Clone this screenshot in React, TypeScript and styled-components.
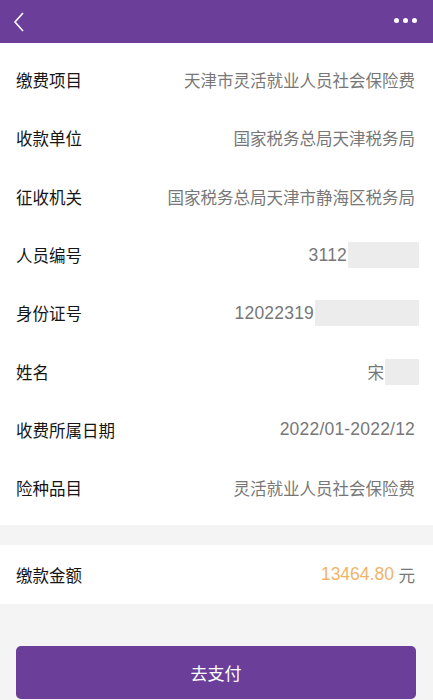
import styled, { createGlobalStyle } from "styled-components";

const GlobalStyle = createGlobalStyle`
  html, body {
    margin: 0;
    padding: 0;
    background: #f4f4f4;
    font-family: "Liberation Sans", "Noto Sans CJK SC", sans-serif;
  }
`;

const rows = [
  { label: "缴费项目", value: "天津市灵活就业人员社会保险费" },
  { label: "收款单位", value: "国家税务总局天津税务局" },
  { label: "征收机关", value: "国家税务总局天津市静海区税务局" },
  { label: "人员编号", value: "3112", num: true, mask: 71 },
  { label: "身份证号", value: "12022319", num: true, mask: 104 },
  { label: "姓名", value: "宋", mask: 34 },
  { label: "收费所属日期", value: "2022/01-2022/12", num: true },
  { label: "险种品目", value: "灵活就业人员社会保险费" },
];

export default function App() {
  return (
    <Page>
      <GlobalStyle />
      <Header>
        <BackButton>
          <svg width="12" height="20" viewBox="0 0 12 20">
            <path d="M10 1 L2 10 L10 19" fill="none" stroke="#fff" strokeWidth="1.6" />
          </svg>
        </BackButton>
        <Dots>
          <Dot />
          <Dot />
          <Dot />
        </Dots>
      </Header>

      <Section>
        {rows.map((r) => (
          <Row key={r.label}>
            <Label>{r.label}</Label>
            <Value>
              <Text $num={!!r.num}>{r.value}</Text>
              {r.mask && <Mask $w={r.mask} />}
            </Value>
          </Row>
        ))}
      </Section>

      <AmountSection>
        <Row>
          <Label>缴款金额</Label>
          <Value>
            <Amount>13464.80</Amount>
            <Text $num={false}> 元</Text>
          </Value>
        </Row>
      </AmountSection>

      <PayButton>去支付</PayButton>
    </Page>
  );
}

const Page = styled.div`
  width: 433px;
  min-height: 700px;
  background: #f4f4f4;
`;

const Header = styled.div`
  height: 43px;
  background: #6b3f99;
  display: flex;
  align-items: center;
  justify-content: space-between;
  padding: 0 16px 0 13px;
`;

const BackButton = styled.div`
  display: flex;
  align-items: center;
  height: 20px;
`;

const Dots = styled.div`
  display: flex;
  gap: 4px;
  margin-top: -3px;
`;

const Dot = styled.span`
  width: 5px;
  height: 5px;
  border-radius: 50%;
  background: #fff;
`;

const Section = styled.div`
  background: #fff;
  padding: 8px 0;
`;

const AmountSection = styled.div`
  background: #fff;
  margin-top: 20px;
`;

const Row = styled.div`
  height: 58.3px;
  display: flex;
  align-items: center;
  justify-content: space-between;
  padding: 0 18px 0 16px;
`;

const Label = styled.span`
  font-size: 16.5px;
  color: #151515;
`;

const Value = styled.span`
  display: flex;
  align-items: center;
  white-space: pre;
`;

const Text = styled.span<{ $num: boolean }>`
  font-size: ${(p) => (p.$num ? "17.5px" : "16.5px")};
  letter-spacing: ${(p) => (p.$num ? "0.2px" : "0")};
  color: #777;
`;

const Mask = styled.span<{ $w: number }>`
  display: inline-block;
  width: ${(p) => p.$w}px;
  height: 26px;
  background: #ececec;
  margin-left: 1px;
  margin-right: -4px;
`;

const Amount = styled.span`
  font-size: 17.5px;
  color: #efb46a;
`;

const PayButton = styled.button`
  display: flex;
  align-items: center;
  justify-content: center;
  width: 400px;
  height: 53px;
  margin: 42px 0 0 16px;
  border: none;
  border-radius: 5px;
  background: #6b3f99;
  color: #fff;
  font-size: 17px;
  font-family: "Liberation Sans", "Noto Sans CJK SC", sans-serif;
`;
